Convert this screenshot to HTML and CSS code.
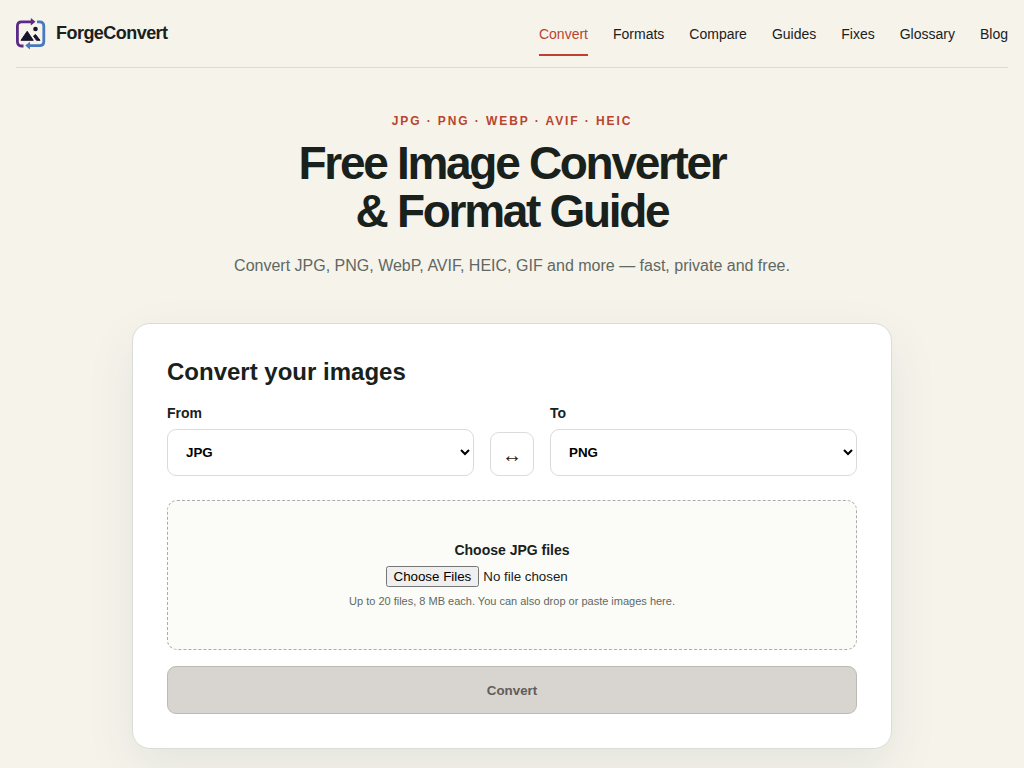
FILE: index.html
```html
<!DOCTYPE html>
<html lang="en">
<head>
<meta charset="utf-8">
<meta name="viewport" content="width=device-width, initial-scale=1">
<title>ForgeConvert</title>
<link rel="stylesheet" href="styles.css">
</head>
<body>
<header class="site-header">
  <a class="brand" href="#">
    <svg class="brand-mark" viewBox="0 0 30 32" aria-hidden="true">
      <g fill="none" stroke-width="2.8">
        <path stroke="#5b2a86" d="M7.500 28H5.500Q1.400 28 1.400 23.500V8Q1.400 3.800 5.500 3.800H15.500"/>
        <path stroke="#4679bd" d="M21 3.800H23.500Q27.800 3.800 27.800 8V23.500Q27.800 27.600 23.500 27.600H13"/>
      </g>
      <path fill="#5b2a86" d="M14.800 0L19.500 3.800L14.800 7.600Z"/>
      <path fill="#4679bd" d="M14 23.800L9.200 27.600L14 31.500Z"/>
      <path fill="#17142b" stroke="#17142b" stroke-linejoin="round" d="M5 22.300L11.200 13.300L17.200 22.300ZM17.500 18L19.500 16.500L24 22.300H20.500Z"/>
      <circle cx="19.500" cy="11" r="2.300" fill="#17142b"/>
    </svg>
    <span>ForgeConvert</span>
  </a>
  <nav class="nav" aria-label="Main">
    <a class="active" href="#" aria-current="page">Convert</a>
    <a href="#">Formats</a>
    <a href="#">Compare</a>
    <a href="#">Guides</a>
    <a href="#">Fixes</a>
    <a href="#">Glossary</a>
    <a href="#">Blog</a>
  </nav>
</header>
<main>
  <section class="hero">
    <p class="eyebrow">JPG · PNG · WEBP · AVIF · HEIC</p>
    <h1>Free Image Converter<br>&amp; Format Guide</h1>
    <p class="lead">Convert JPG, PNG, WebP, AVIF, HEIC, GIF and more — fast, private and free.</p>
  </section>
  <form class="card">
    <h2>Convert your images</h2>
    <div class="formats">
      <div class="field">
        <label for="from">From</label>
        <select id="from"><option>JPG</option><option>PNG</option><option>WebP</option></select>
      </div>
      <button class="swap" type="button" aria-label="Swap formats">↔</button>
      <div class="field">
        <label for="to">To</label>
        <select id="to"><option>PNG</option><option>JPG</option><option>WebP</option></select>
      </div>
    </div>
    <div class="dropzone">
      <label for="files">Choose JPG files</label>
      <input id="files" type="file" multiple>
      <small>Up to 20 files, 8 MB each. You can also drop or paste images here.</small>
    </div>
    <button class="submit" type="submit" disabled>Convert</button>
  </form>
</main>
</body>
</html>
```
FILE: styles.css
```css
* {
  box-sizing: border-box;
}

body {
  margin: 0;
  padding: 0 16px 48px;
  background: #f6f3eb;
  color: #19211d;
  font-family: "Liberation Sans", Arial, sans-serif;
  font-size: 16px;
}

h1,
h2,
p {
  margin: 0;
}

button,
input,
select {
  font-family: inherit;
}

.site-header {
  display: flex;
  align-items: center;
  justify-content: space-between;
  min-height: 68px;
  border-bottom: 1px solid #d9ddd7;
}

.brand {
  display: flex;
  align-items: center;
  gap: 10px;
  color: inherit;
  font-size: 18px;
  font-weight: 700;
  letter-spacing: -0.03em;
  text-decoration: none;
}

.brand-mark {
  width: 30px;
  height: 32px;
}

.nav {
  display: flex;
  gap: 25px;
}

.nav a {
  padding: 12px 0 10px;
  border-bottom: 2px solid transparent;
  color: inherit;
  font-size: 14px;
  line-height: 20px;
  text-decoration: none;
}

.nav .active {
  border-color: #c0402b;
  color: #b8452f;
}

.hero {
  padding: 44px 0;
  text-align: center;
}

.eyebrow {
  color: #b8452f;
  font-size: 12px;
  font-weight: 700;
  letter-spacing: 0.16em;
  line-height: 18px;
}

h1 {
  margin-top: 9px;
  font-size: 46px;
  letter-spacing: -0.05em;
  line-height: 48px;
}

.lead {
  margin-top: 18px;
  color: #5f6863;
  line-height: 26px;
}

.card {
  max-width: 760px;
  margin: 0 auto;
  padding: 34px;
  border: 1px solid #d9ddd7;
  border-radius: 18px;
  background: #fff;
  box-shadow: 0 18px 50px rgba(30, 65, 45, 0.08);
}

h2 {
  font-size: 24px;
  line-height: 28px;
}

.formats {
  display: grid;
  grid-template-columns: 1fr 44px 1fr;
  align-items: end;
  gap: 16px;
  margin-top: 19px;
}

.field {
  display: grid;
  gap: 8px;
}

label {
  font-size: 14px;
  font-weight: 700;
  line-height: 16px;
}

select {
  width: 100%;
  height: 47px;
  padding: 0 14px;
  border: 1px solid #d9ddd7;
  border-radius: 9px;
  background: #fff;
  color: #000;
  font-weight: 700;
}

.swap {
  height: 44px;
  padding: 2px 0 0;
  border: 1px solid #d9ddd7;
  border-radius: 9px;
  background: #fff;
  color: inherit;
  font-size: 20px;
}

.dropzone {
  display: grid;
  justify-items: center;
  align-content: center;
  gap: 8px;
  min-height: 150px;
  margin: 24px 0 16px;
  border: 1px dashed #a9aea9;
  border-radius: 10px;
  background: #fbfcf7;
}

.dropzone small {
  color: #5f6863;
  font-size: 11px;
  line-height: 13px;
}

.submit {
  display: block;
  width: 100%;
  height: 48px;
  border: 1px solid #bdbab6;
  border-radius: 9px;
  background: #d8d4cf;
  color: #625d57;
  font-weight: 700;
}
```
